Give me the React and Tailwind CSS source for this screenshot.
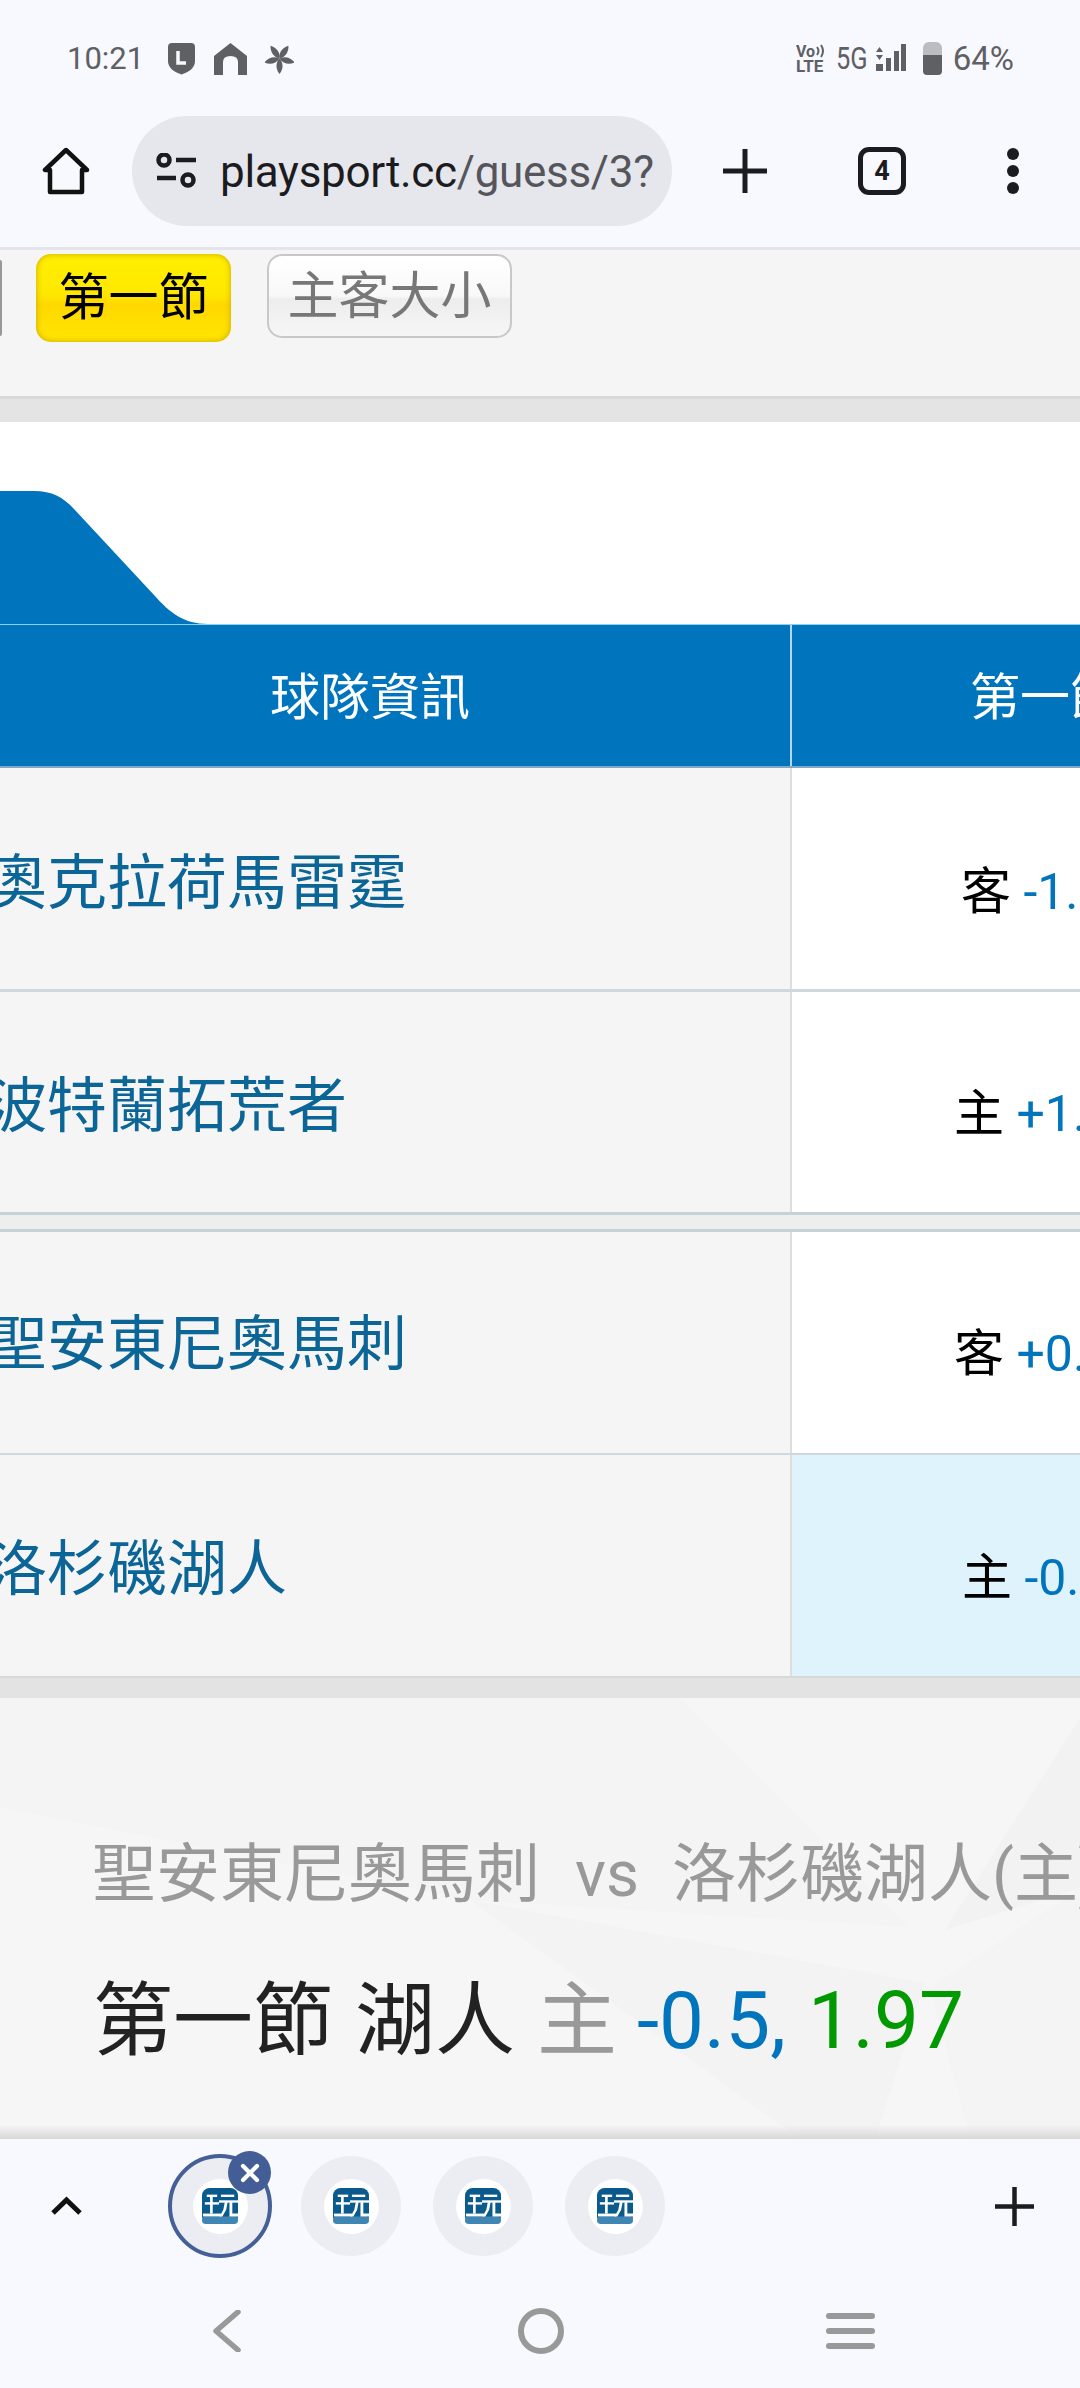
import React from "react";

const Logo = () => (
  <svg width="36" height="36" viewBox="0 0 38 38">
    <rect width="38" height="38" rx="8" fill="#0b5a8e" />
    <rect y="30" width="38" height="8" rx="4" fill="#3f86b4" />
    <g fill="#fff">
      <rect x="5" y="7" width="11" height="2.500" />
      <rect x="3" y="15" width="15" height="2.500" />
      <rect x="8.500" y="8" width="2.800" height="19" />
      <rect x="1" y="27" width="19" height="3" />
      <rect x="20" y="7" width="14" height="2.500" />
      <rect x="18" y="13" width="20" height="2.500" />
      <path d="M24 15h3l-1.500 8-4 7h-3l4-7z" />
      <path d="M29 15h3v12h6v3h-9z" />
    </g>
  </svg>
);

const TabCircle = ({ active }) => (
  <div
    className={
      active
        ? "relative flex h-[104px] w-[104px] items-center justify-center rounded-full border-[4px] border-[#455f97] bg-[#ecedf3]"
        : "flex h-[100px] w-[100px] items-center justify-center rounded-full bg-[#ecedf3]"
    }
  >
    <div className="flex h-[55px] w-[55px] items-center justify-center rounded-full bg-white">
      <Logo />
    </div>
    {active && (
      <div className="absolute right-[-3px] top-[-7px] flex h-[43px] w-[43px] items-center justify-center rounded-full bg-[#435e96]">
        <svg width="24" height="24" viewBox="0 0 24 24">
          <path d="M5 5l14 14M19 5L5 19" stroke="#fff" strokeWidth="4.2" strokeLinecap="round" />
        </svg>
      </div>
    )}
  </div>
);

const Row = ({ name, side, val, bg, pt, lpt, h }) => (
  <div className={`flex ${h}`}>
    <div className={`flex w-[790px] shrink-0 items-center overflow-hidden bg-[#f5f5f5] ${lpt}`}>
      <span className="ml-[-13px] whitespace-nowrap text-[60px] leading-none text-[#0b6596]">{name}</span>
    </div>
    <div className="w-[2px] shrink-0 bg-[#dedede]" />
    <div className={`flex flex-1 items-center overflow-hidden ${bg}`}>
      <div className={`whitespace-nowrap text-[50px] leading-none text-black ${pt}`}>
        {side} <span className="text-[#0075bd]">{val}</span>
      </div>
    </div>
  </div>
);

const leaf = "M14.500 15.500C10 11 11 4 14.500 0 18 4 19 11 14.500 15.500Z";

export default function App() {
  return (
    <div className="flex h-[2388px] w-[1080px] flex-col overflow-hidden bg-[#f8f9fe] font-[Roboto,'Noto_Sans_CJK_TC',sans-serif]">
      {/* status bar */}
      <div className="flex h-[116px] shrink-0 items-center justify-between pl-[67px] pr-[66px] text-[#5f6064]">
        <div className="flex items-center">
          <span className="w-[80px] text-[31px] leading-none">10:21</span>
          <svg className="ml-[20px]" width="29" height="33" viewBox="0 0 29 33">
            <path d="M1 5q0-4 4-4h19q4 0 4 4v14q0 9-13.500 13.500Q1 28 1 19z" fill="#5f6064" />
            <path d="M11 9v12h8" fill="none" stroke="#f8f9fe" strokeWidth="3.500" />
          </svg>
          <svg className="ml-[18px]" width="33" height="33" viewBox="0 0 33 33">
            <path d="M16.500 1L33 14v19H24V20q0-6-7.500-6T9 20v13H0V14z" fill="#5f6064" />
          </svg>
          <svg className="ml-[18px]" width="29" height="31" viewBox="0 0 29 31">
            <g fill="#5f6064">
              <path d={leaf} transform="rotate(-35 14.500 15.500)" />
              <path d={leaf} transform="rotate(35 14.500 15.500)" />
              <path d={leaf} transform="rotate(-105 14.500 15.500)" />
              <path d={leaf} transform="rotate(105 14.500 15.500)" />
              <path d={leaf} transform="rotate(180 14.500 15.500)" />
            </g>
          </svg>
        </div>
        <div className="flex items-center">
          <svg width="30" height="28" viewBox="0 0 30 28">
            <text x="0" y="13" fontSize="16" fontWeight="700" fill="#5f6064" fontFamily="Roboto">Vo</text>
            <path d="M21 3q3 4 0 8M25 1q4 6 0 12" fill="none" stroke="#5f6064" strokeWidth="2" />
            <text x="0" y="28" fontSize="17" fontWeight="700" fill="#5f6064" fontFamily="Roboto">LTE</text>
          </svg>
          <span className="ml-[10px] w-[28px] origin-left scale-x-[0.82] whitespace-nowrap text-[31px] leading-none">5G</span>
          <svg className="ml-[9px]" width="33" height="28" viewBox="0 0 33 28">
            <g fill="#5f6064">
              <path d="M3 8l3.500-5L10 8zM3 11l3.500 5L10 11z" />
              <rect x="3" y="20" width="7" height="7" />
              <rect x="13" y="14" width="5" height="13" />
              <rect x="21" y="7" width="5" height="20" />
              <rect x="28" y="0" width="5" height="27" />
            </g>
          </svg>
          <div className="ml-[17px] flex h-[33px] w-[19px] flex-col overflow-hidden rounded-[4px]">
            <div className="h-[13px] rounded-t-[6px] bg-[#bcbdc1]" />
            <div className="flex-1 bg-[#5f6064]" />
          </div>
          <span className="ml-[11px] text-[33px] leading-none">64%</span>
        </div>
      </div>

      {/* toolbar */}
      <div className="flex h-[131px] shrink-0 items-center pb-[21px] pl-[42px]">
        <svg width="48" height="48" viewBox="0 0 48 48">
          <path d="M24 3L3 23h5v22h32V23h5z" fill="none" stroke="#111" strokeWidth="4.500" strokeLinejoin="round" />
        </svg>
        <div className="ml-[42px] flex h-[110px] w-[540px] items-center rounded-full bg-[#e6e7ed] pl-[23px]">
          <svg width="42" height="36" viewBox="0 0 42 36">
            <g fill="none" stroke="#1c1c20" strokeWidth="4.500">
              <circle cx="9" cy="7" r="5.500" />
              <circle cx="33" cy="27" r="5.500" />
              <path d="M21 7h20M2 25h19" />
            </g>
          </svg>
          <span className="ml-[23px] whitespace-nowrap pt-[2px] text-[44px] leading-none tracking-[-0.3px] text-[#55555b]">
            <span className="text-[#1c1c20]">playsport.cc</span>/guess/3?
          </span>
        </div>
        <svg className="ml-[51px]" width="44" height="44" viewBox="0 0 44 44">
          <path d="M0 22h44M22 0v44" stroke="#1c1c20" strokeWidth="5" strokeLinecap="round" />
        </svg>
        <div className="ml-[91px] flex h-[48px] w-[48px] items-center justify-center rounded-[11px] border-[5px] border-[#1c1c20] text-[27px] font-bold leading-none text-[#1c1c20]">
          4
        </div>
        <div className="ml-[101px] flex w-[12px] flex-col gap-[5px]">
          <div className="h-[12px] rounded-full bg-[#1c1c20]" />
          <div className="h-[12px] rounded-full bg-[#1c1c20]" />
          <div className="h-[12px] rounded-full bg-[#1c1c20]" />
        </div>
      </div>
      <div className="h-[3px] shrink-0 bg-[#e4e5ea]" />

      {/* filter buttons */}
      <div className="flex h-[146px] shrink-0 items-start gap-[36px] bg-[#f5f5f5] pt-[4px]">
        <div className="relative ml-[36px] flex h-[88px] w-[195px] items-center justify-center rounded-[15px] bg-[linear-gradient(#fff000_0%,#ffe800_45%,#ffd800_58%,#ffe600_100%)] text-[50px] leading-none text-black shadow-[inset_0_0_6px_#c9a500]">
          <div className="absolute left-[-36px] top-[6px] h-[76px] w-[2px] rounded-r bg-[#999]" />
          第一節
        </div>
        <div className="flex h-[84px] w-[245px] items-center justify-center rounded-[15px] border-[2px] border-[#c8c8c8] bg-[linear-gradient(#ffffff_0%,#f8f8f8_50%,#ededed_54%,#f6f6f6_100%)] text-[51px] leading-none text-[#777]">
          主客大小
        </div>
      </div>
      <div className="h-[3px] shrink-0 bg-[#d8d8d8]" />
      <div className="h-[23px] shrink-0 bg-[#e4e4e4]" />

      {/* tab */}
      <div className="flex h-[202px] shrink-0 items-end bg-white">
        <svg width="210" height="133" viewBox="0 0 210 133">
          <path d="M0 0H34C52 0 63 6 74 18L154 104C170 122 184 133 208 133H0Z" fill="#0075bd" />
        </svg>
      </div>
      <div className="h-[1px] shrink-0 bg-[#8fd0f5]" />

      {/* table header */}
      <div className="flex h-[141px] shrink-0 bg-[#0075bd] text-[50px] leading-none text-white">
        <div className="flex w-[790px] shrink-0 items-center justify-center pt-[5px]">
          <span className="mr-[50px]">球隊資訊</span>
        </div>
        <div className="w-[2px] shrink-0 bg-[#b5d7ec]" />
        <div className="flex flex-1 items-center overflow-hidden pl-[178px] pt-[5px]">
          <span className="whitespace-nowrap">第一節</span>
        </div>
      </div>
      <div className="h-[2px] shrink-0 bg-[#7ea8c4]" />

      {/* rows */}
      <Row h="h-[221px]" lpt="pt-[11px]" name="奧克拉荷馬雷霆" side="客" val="-1.5, 1.90" bg="bg-white pl-[169px]" pt="pt-[27px]" />
      <div className="h-[3px] shrink-0 bg-[#cfd8de]" />
      <Row h="h-[220px]" lpt="pt-[10px]" name="波特蘭拓荒者" side="主" val="+1.5, 1.90" bg="bg-white pl-[162px]" pt="pt-[24px]" />
      <div className="h-[3px] shrink-0 bg-[#c7d1d8]" />
      <div className="h-[14px] shrink-0 bg-[#eeeeee]" />
      <div className="h-[3px] shrink-0 bg-[#c7d1d8]" />
      <Row h="h-[221px]" lpt="pt-[5px]" name="聖安東尼奧馬刺" side="客" val="+0.5, 1.90" bg="bg-white pl-[162px]" pt="pt-[23px]" />
      <div className="h-[2px] shrink-0 bg-[#cfd8de]" />
      <Row h="h-[221px]" lpt="pt-[9px]" name="洛杉磯湖人" side="主" val="-0.5, 1.97" bg="bg-[#dff3fd] pl-[170px]" pt="pt-[25px]" />
      <div className="h-[2px] shrink-0 bg-[#d8d8d8]" />
      <div className="h-[20px] shrink-0 bg-[#e3e3e3]" />

      {/* pick summary */}
      <div className="relative flex flex-1 flex-col overflow-hidden bg-[#f6f6f6] pl-[92px] pt-[140px]">
        <svg className="absolute left-0 top-0" width="1080" height="441" viewBox="0 0 1080 441">
          <polygon points="0,0 680,0 909,229 470,202 0,109" fill="#f4f4f4" />
          <polygon points="470,202 925,285 875,441 800,441" fill="#f3f3f3" />
          <polygon points="945,232 1080,20 1080,190" fill="#f2f2f2" />
          <polygon points="930,290 1080,190 1080,441 970,441" fill="#f4f4f4" />
        </svg>
        <div className="relative flex items-center whitespace-nowrap text-[64px] leading-[74px] text-[#999]">
          <span>聖安東尼奧馬刺</span>
          <span className="ml-[35px]">vs</span>
          <span className="ml-[33px]">洛杉磯湖人(主)</span>
        </div>
        <div className="relative mt-[62px] flex items-center whitespace-nowrap pl-[1px] text-[80px] leading-[94px] text-[#222]">
          <span>第一節</span>
          <span className="ml-[22px]">湖人</span>
          <span className="ml-[22px] text-[#999]">主</span>
          <span className="ml-[20px] text-[#0075bd]">-0.5,</span>
          <span className="ml-[22px] text-[#009900]">1.97</span>
        </div>
        <div className="absolute bottom-0 left-0 h-[14px] w-full bg-[linear-gradient(rgba(215,215,215,0),#d8d8d8)]" />
      </div>

      {/* tab strip */}
      <div className="flex h-[134px] shrink-0 items-center pl-[50px] pr-[46px]">
        <svg width="33" height="20" viewBox="0 0 33 20">
          <path d="M3 17L16.500 4 30 17" fill="none" stroke="#111" strokeWidth="5" />
        </svg>
        <div className="ml-[85px] flex items-center gap-[32px]">
          <div className="mr-[-3px]">
            <TabCircle active />
          </div>
          <TabCircle />
          <TabCircle />
          <TabCircle />
        </div>
        <svg className="ml-auto" width="39" height="39" viewBox="0 0 39 39">
          <path d="M0 19.500h39M19.500 0v39" stroke="#1c1c20" strokeWidth="4.500" />
        </svg>
      </div>

      {/* system nav */}
      <div className="flex h-[115px] shrink-0 items-center pl-[213px]">
        <svg width="28" height="42" viewBox="0 0 28 42">
          <path d="M25 2L3 21l22 19" fill="none" stroke="#999" strokeWidth="5.500" strokeLinecap="round" strokeLinejoin="round" />
        </svg>
        <div className="ml-[277px] h-[46px] w-[46px] rounded-full border-[6px] border-[#999]" />
        <div className="ml-[262px] flex w-[49px] flex-col gap-[9px]">
          <div className="h-[6px] rounded-full bg-[#999]" />
          <div className="h-[6px] rounded-full bg-[#999]" />
          <div className="h-[6px] rounded-full bg-[#999]" />
        </div>
      </div>
    </div>
  );
}
